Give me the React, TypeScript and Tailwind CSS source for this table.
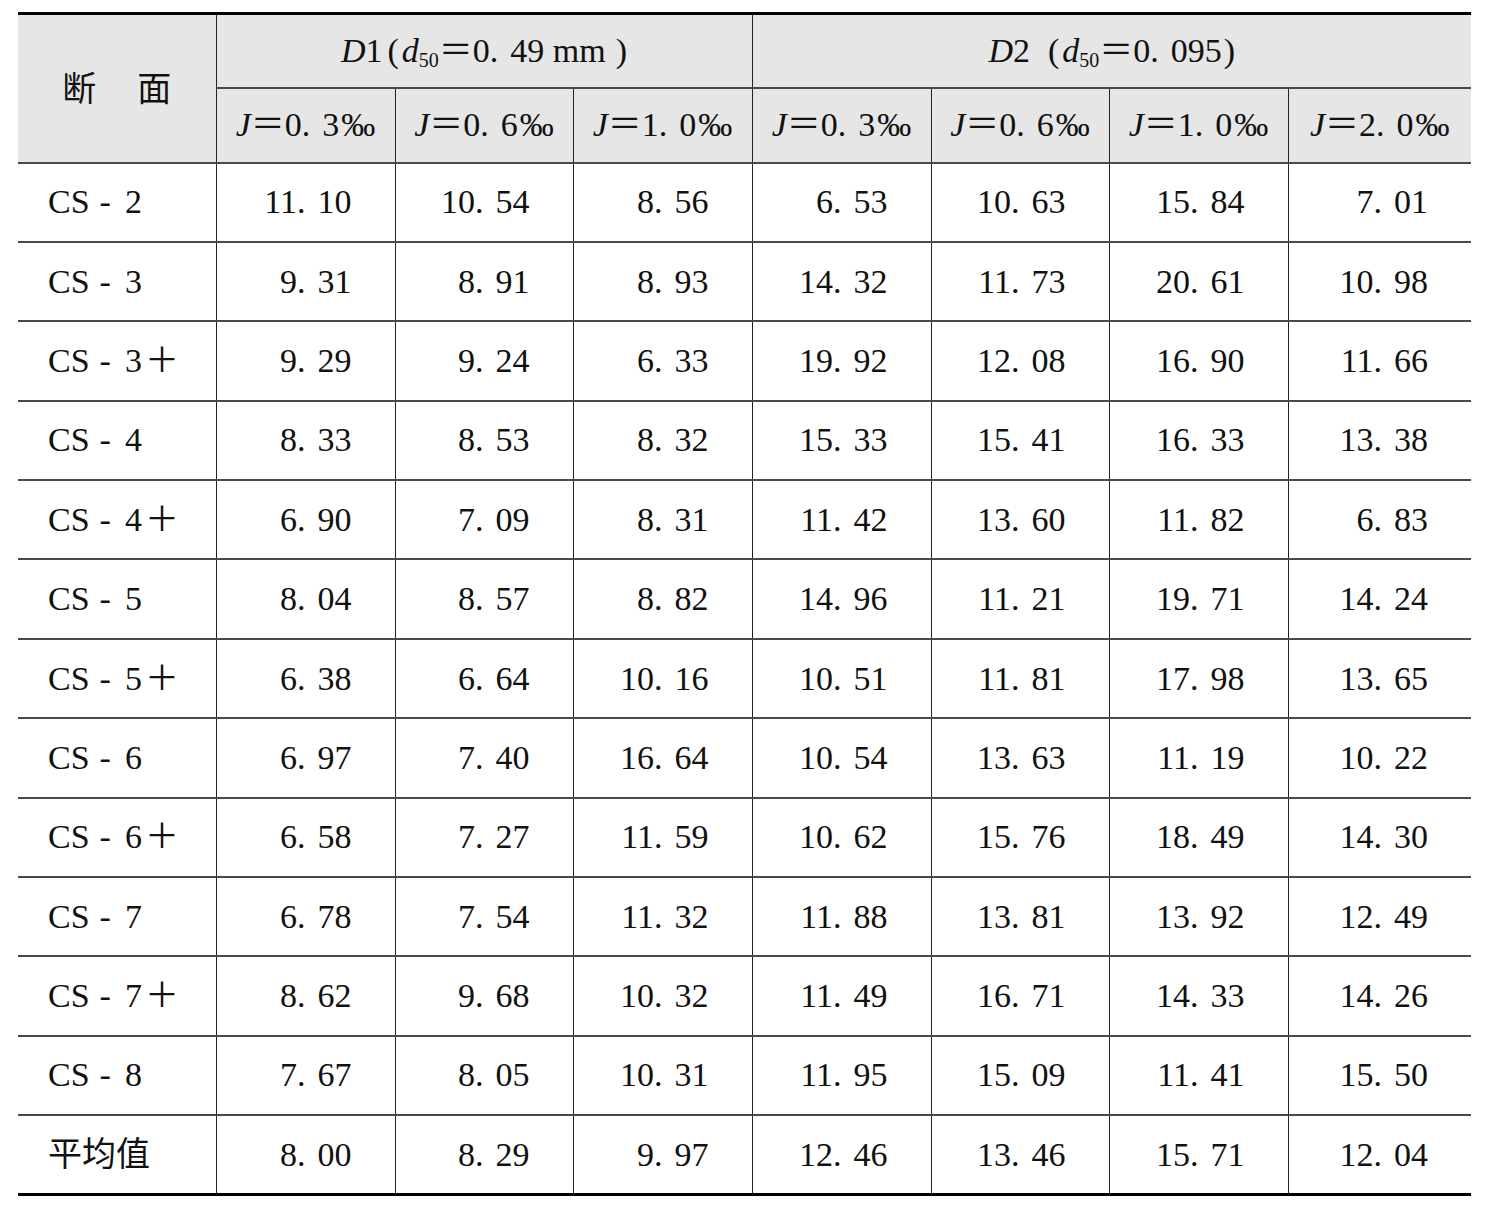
const FONT = "font-['Liberation_Serif','Noto_Sans_CJK_SC',serif]"

type Row = { label: string; num?: string; plus?: boolean; values: string[] }

const rows: Row[] = [
  { label: 'CS', num: '2', values: ['11.10', '10.54', '8.56', '6.53', '10.63', '15.84', '7.01'] },
  { label: 'CS', num: '3', values: ['9.31', '8.91', '8.93', '14.32', '11.73', '20.61', '10.98'] },
  { label: 'CS', num: '3', plus: true, values: ['9.29', '9.24', '6.33', '19.92', '12.08', '16.90', '11.66'] },
  { label: 'CS', num: '4', values: ['8.33', '8.53', '8.32', '15.33', '15.41', '16.33', '13.38'] },
  { label: 'CS', num: '4', plus: true, values: ['6.90', '7.09', '8.31', '11.42', '13.60', '11.82', '6.83'] },
  { label: 'CS', num: '5', values: ['8.04', '8.57', '8.82', '14.96', '11.21', '19.71', '14.24'] },
  { label: 'CS', num: '5', plus: true, values: ['6.38', '6.64', '10.16', '10.51', '11.81', '17.98', '13.65'] },
  { label: 'CS', num: '6', values: ['6.97', '7.40', '16.64', '10.54', '13.63', '11.19', '10.22'] },
  { label: 'CS', num: '6', plus: true, values: ['6.58', '7.27', '11.59', '10.62', '15.76', '18.49', '14.30'] },
  { label: 'CS', num: '7', values: ['6.78', '7.54', '11.32', '11.88', '13.81', '13.92', '12.49'] },
  { label: 'CS', num: '7', plus: true, values: ['8.62', '9.68', '10.32', '11.49', '16.71', '14.33', '14.26'] },
  { label: 'CS', num: '8', values: ['7.67', '8.05', '10.31', '11.95', '15.09', '11.41', '15.50'] },
  { label: '平均值', values: ['8.00', '8.29', '9.97', '12.46', '13.46', '15.71', '12.04'] },
]

const slopes = [
  ['0', '3'],
  ['0', '6'],
  ['1', '0'],
  ['0', '3'],
  ['0', '6'],
  ['1', '0'],
  ['2', '0'],
]

// the source uses a wide full-stop, so put some air after it
function Num({ value }: { value: string }) {
  const [a, b] = value.split('.')
  return (
    <span>
      {a}.<span className="ml-[12px]">{b}</span>
    </span>
  )
}

function Slope({ a, b }: { a: string; b: string }) {
  return (
    <span className="whitespace-nowrap">
      <i>J</i>＝{a}.<span className="ml-[12px]">{b}</span>
      <span className="ml-[2px]">‰</span>
    </span>
  )
}

const hCell = 'border-x border-x-[#222] border-b-2 border-b-[#4a4a4a] bg-[#e6e6e6] font-normal'
const dCell = 'border-x border-x-[#222] border-b-2 border-b-[#4a4a4a]'

export default function App() {
  return (
    <div className={`h-[1212px] w-[1485px] bg-white pl-[18px] pt-[12px] text-[34px] leading-none text-[#111] ${FONT}`}>
      <table className="w-[1453px] table-fixed border-collapse border-t-[3px] border-t-black">
        <colgroup>
          <col className="w-[198px]" />
          <col className="w-[179px]" />
          <col className="w-[178px]" />
          <col className="w-[179px]" />
          <col className="w-[179px]" />
          <col className="w-[178px]" />
          <col className="w-[179px]" />
          <col className="w-[183px]" />
        </colgroup>
        <thead>
          <tr className="h-[74px]">
            <th rowSpan={2} className={`${hCell} border-l-0`}>
              <div className="flex translate-y-[2px] justify-center gap-[41px]">
                <span>断</span>
                <span>面</span>
              </div>
            </th>
            <th colSpan={3} className={`${hCell} whitespace-nowrap`}>
              <i>D</i>1<span className="ml-[5px] mr-[3px]">(</span>
              <i>d</i>
              <sub className="text-[20px]">50</sub>＝0.<span className="ml-[12px]">49 mm</span>
              <span className="ml-[10px]">)</span>
            </th>
            <th colSpan={4} className={`${hCell} whitespace-nowrap border-r-0`}>
              <i>D</i>2<span className="ml-[18px] mr-[3px]">(</span>
              <i>d</i>
              <sub className="text-[20px]">50</sub>＝0.<span className="ml-[12px]">095</span>
              <span className="ml-[2px]">)</span>
            </th>
          </tr>
          <tr className="h-[75px]">
            {slopes.map(([a, b], i) => (
              <th key={i} className={`${hCell} ${i === slopes.length - 1 ? 'border-r-0' : ''}`}>
                <Slope a={a} b={b} />
              </th>
            ))}
          </tr>
        </thead>
        <tbody>
          {rows.map((row, r) => {
            const last = r === rows.length - 1
            const bottom = last ? 'border-b-[3px] border-b-black' : ''
            return (
              <tr key={r} className="h-[79.4px]">
                <td className={`${dCell} ${bottom} border-l-0 pl-[30px] text-left`}>
                  {row.num ? (
                    <span className="whitespace-nowrap">
                      {row.label}
                      <span className="ml-[10px] mr-[14px]">-</span>
                      {row.num}
                      {row.plus ? <span className="ml-[3px]">＋</span> : null}
                    </span>
                  ) : (
                    row.label
                  )}
                </td>
                {row.values.map((v, c) => (
                  <td
                    key={c}
                    className={`${dCell} ${bottom} pr-[43px] text-right ${c === row.values.length - 1 ? 'border-r-0' : ''}`}
                  >
                    <Num value={v} />
                  </td>
                ))}
              </tr>
            )
          })}
        </tbody>
      </table>
    </div>
  )
}
